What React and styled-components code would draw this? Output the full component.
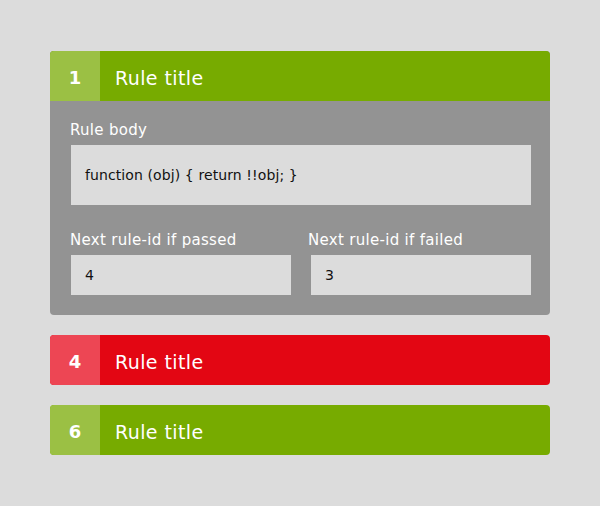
import React from 'react'
import styled, { createGlobalStyle } from 'styled-components'

const GlobalStyle = createGlobalStyle`
  html, body {
    margin: 0;
    padding: 0;
    background: #dcdcdc;
    font-family: "DejaVu Sans", "Open Sans", sans-serif;
  }
`

const rules = [
  { id: 1, title: 'Rule title', status: 'passed', open: true, body: 'function (obj) { return !!obj; }', passed: '4', failed: '3' },
  { id: 4, title: 'Rule title', status: 'failed' },
  { id: 6, title: 'Rule title', status: 'passed' },
]

function App() {
  return (
    <Page>
      <GlobalStyle />
      {rules.map(rule => (
        <Card key={rule.id}>
          <Header status={rule.status}>
            <Badge status={rule.status}>{rule.id}</Badge>
            <Title>{rule.title}</Title>
          </Header>
          {rule.open && (
            <Body>
              <Field>
                <Label>Rule body</Label>
                <CodeBox>{rule.body}</CodeBox>
              </Field>
              <Row>
                <Field>
                  <Label>Next rule-id if passed</Label>
                  <Input>{rule.passed}</Input>
                </Field>
                <Field>
                  <Label shift>Next rule-id if failed</Label>
                  <Input>{rule.failed}</Input>
                </Field>
              </Row>
            </Body>
          )}
        </Card>
      ))}
    </Page>
  )
}

export default App

const colors = {
  passed: { main: '#77ab00', badge: '#9bc044' },
  failed: { main: '#e30613', badge: '#ed4654' },
}

const Page = styled.div`
  width: 500px;
  padding: 51px 50px 0;
  display: flex;
  flex-direction: column;
  gap: 20px;
`

const Card = styled.div`
  border-radius: 4px;
  overflow: hidden;
  background: #939393;
`

const Header = styled.div`
  height: 50px;
  display: flex;
  align-items: center;
  background: ${p => colors[p.status].main};
  color: #fff;
`

const Badge = styled.div`
  width: 50px;
  height: 100%;
  display: flex;
  align-items: center;
  justify-content: center;
  padding-top: 3px;
  box-sizing: border-box;
  background: ${p => colors[p.status].badge};
  font-weight: 700;
  font-size: 18px;
`

const Title = styled.div`
  padding: 3px 0 0 15px;
  font-size: 19px;
  letter-spacing: 0.4px;
`

const Body = styled.div`
  padding: 20px 19px 20px 21px;
  display: flex;
  flex-direction: column;
  gap: 26px;
`

const Row = styled.div`
  display: grid;
  grid-template-columns: 1fr 1fr;
  gap: 20px;
`

const Field = styled.div`
  display: flex;
  flex-direction: column;
`

const Label = styled.div`
  color: #fff;
  font-size: 15px;
  line-height: 18px;
  letter-spacing: 0.3px;
  margin-bottom: 6px;
  margin-left: ${p => (p.shift ? '-3px' : '-1px')};
`

const CodeBox = styled.div`
  height: 60px;
  background: #dcdcdc;
  display: flex;
  align-items: center;
  padding-left: 14px;
  font-size: 14px;
  letter-spacing: 0.1px;
  color: #111;
`

const Input = styled.div`
  height: 40px;
  background: #dcdcdc;
  display: flex;
  align-items: center;
  padding-left: 14px;
  font-size: 14px;
  color: #111;
`
